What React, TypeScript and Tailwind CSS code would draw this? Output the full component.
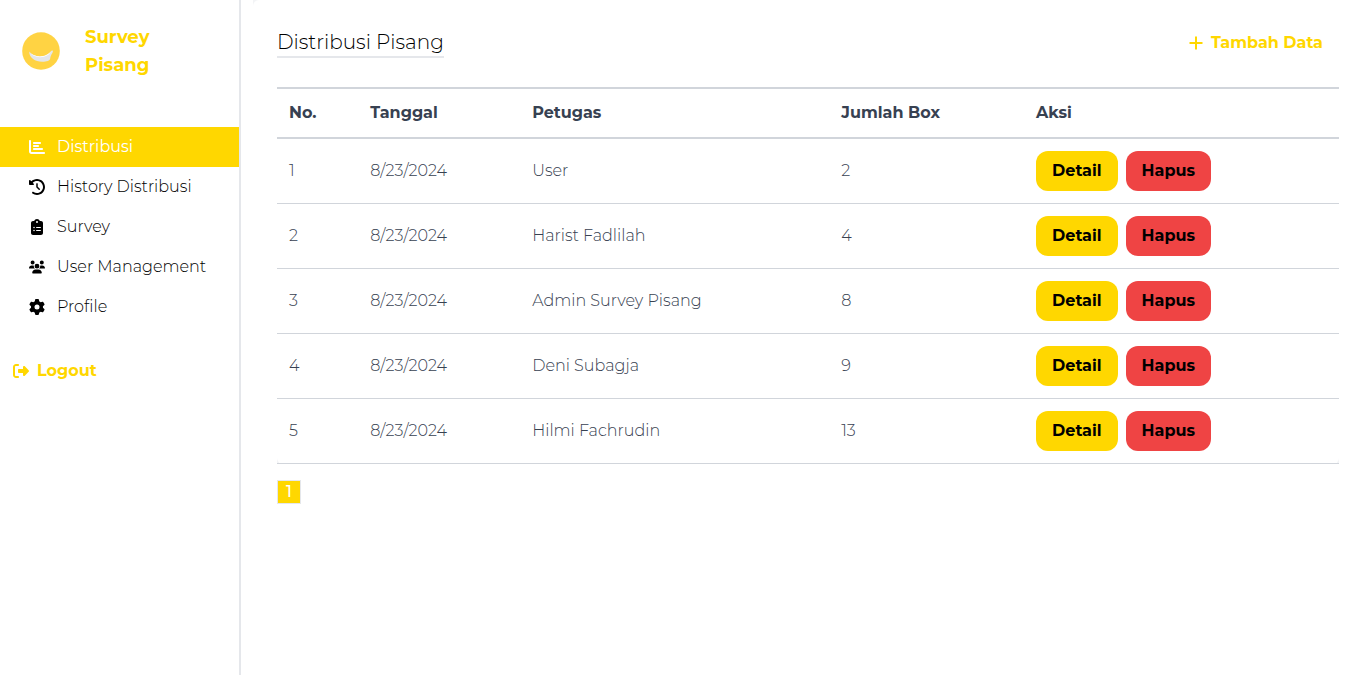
import { FaChartBar, FaClipboardList, FaGear, FaUsers, FaClockRotateLeft, FaRightFromBracket } from "react-icons/fa6";
import type { IconType } from "react-icons";

const menu: { label: string; icon: IconType; active?: boolean }[] = [
  { label: "Distribusi", icon: FaChartBar, active: true },
  { label: "History Distribusi", icon: FaClockRotateLeft },
  { label: "Survey", icon: FaClipboardList },
  { label: "User Management", icon: FaUsers },
  { label: "Profile", icon: FaGear },
];

const rows = [
  { petugas: "User", box: 2 },
  { petugas: "Harist Fadlilah", box: 4 },
  { petugas: "Admin Survey Pisang", box: 8 },
  { petugas: "Deni Subagja", box: 9 },
  { petugas: "Hilmi Fachrudin", box: 13 },
];

function Logo() {
  return (
    <svg viewBox="0 0 38 38" className="size-[38px] shrink-0" aria-hidden="true">
      <circle cx="19" cy="19" r="18.8" fill="#ffd343" />
      <path d="M7.2 19.6C11 25.6 24 26.8 29.3 18.8L30.8 18.6C31.6 20.5 28.5 23 28.2 26.5C27.8 28.8 25 29.8 20 29.8C13.5 29.8 7 26 7.2 19.6Z" fill="#e4e6e9" />
      <path d="M7.2 19.6C11 25.6 24 26.8 29.3 18.8C26 27 12 27.5 7.2 19.6Z" fill="#fff" />
    </svg>
  );
}

function PlusIcon() {
  return (
    <svg viewBox="0 0 14 14" className="size-[14px]" fill="none" stroke="currentColor" strokeWidth="2" aria-hidden="true">
      <path d="M7 0.5v13M0.5 7h13" />
    </svg>
  );
}

export default function App() {
  return (
    <div className="flex min-h-screen bg-white font-['Montserrat','Inter',sans-serif] text-base leading-6 font-[350] text-black">
      <aside className="w-[241px] shrink-0 border-r-2 border-[#e5e7eb]">
        <div className="flex items-center gap-[25px] px-[22px] pt-[23px]">
          <Logo />
          <p className="w-20 text-lg leading-7 font-bold text-[#ffd700]">Survey Pisang</p>
        </div>
        <nav className="mt-12">
          {menu.map(({ label, icon: Icon, active }) => (
            <a
              key={label}
              href="#"
              className={`flex h-10 items-center gap-3 px-[29px] whitespace-nowrap ${active ? "bg-[#ffd700] font-normal text-white" : ""}`}
            >
              <Icon className="size-4 shrink-0" />
              {label}
            </a>
          ))}
        </nav>
        <button type="button" className="mt-8 ml-[13px] flex items-center gap-2 font-bold text-[#ffd700]">
          <FaRightFromBracket className="size-4" />
          Logout
        </button>
      </aside>
      <main className="ml-3 min-w-0 flex-1 bg-[#f3f4f6]">
        <div className="h-full rounded-tl-md bg-white pt-7 pr-[18px] pl-6">
          <div className="flex items-start justify-between">
            <h1 className="border-b-2 border-[#e5e7eb] text-xl leading-7 font-[350]">Distribusi Pisang</h1>
            <button type="button" className="mr-4 flex items-center gap-2 pt-[3px] font-bold text-[#ffd700]">
              <PlusIcon />
              Tambah Data
            </button>
          </div>
          <div className="mt-[29px] bg-[#f3f4f6]">
            <table className="w-full table-fixed border-collapse rounded-b-md bg-white text-left text-[#374151]">
              <colgroup>
                <col className="w-[7.65%]" />
                <col className="w-[15.25%]" />
                <col className="w-[29.1%]" />
                <col className="w-[18.35%]" />
                <col />
              </colgroup>
              <thead>
                <tr className="border-y-2 border-[#d1d5db]">
                  {["No.", "Tanggal", "Petugas", "Jumlah Box", "Aksi"].map((title) => (
                    <th key={title} scope="col" className="px-3 py-3 font-bold">{title}</th>
                  ))}
                </tr>
              </thead>
              <tbody>
                {rows.map((row, i) => (
                  <tr key={row.petugas} className="border-b border-[#d1d5db]">
                    <td className="px-3 py-3">{i + 1}</td>
                    <td className="px-3 py-3">8/23/2024</td>
                    <td className="px-3 py-3">{row.petugas}</td>
                    <td className="px-3 py-3">{row.box}</td>
                    <td className="px-3 py-3">
                      <div className="flex gap-2 font-bold text-black">
                        <button type="button" className="rounded-xl bg-[#ffd700] px-4 py-2">Detail</button>
                        <button type="button" className="rounded-xl bg-[#ef4444] px-4 py-2">Hapus</button>
                      </div>
                    </td>
                  </tr>
                ))}
              </tbody>
            </table>
          </div>
          <button type="button" className="mt-4 flex size-6 items-center justify-center border border-[#e5e7eb] bg-[#ffd700] font-medium text-white">
            1
          </button>
        </div>
      </main>
    </div>
  );
}
